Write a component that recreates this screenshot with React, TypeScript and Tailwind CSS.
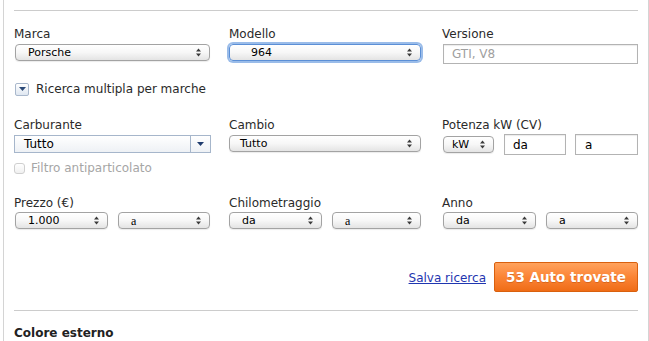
import React from "react";

function UpDown() {
  return (
    <svg width="5" height="9" viewBox="0 0 5 9" className="shrink-0" aria-hidden>
      <path d="M2.5 0.5 L5 3.5 L0 3.5 Z" fill="#3a3a3a" />
      <path d="M0 5.5 L5 5.5 L2.5 8.5 Z" fill="#3a3a3a" />
    </svg>
  );
}

function MacSelect({
  text,
  className = "",
  indent = "pl-[12px]",
  focused = false,
  serif = false,
}: {
  text: string;
  className?: string;
  indent?: string;
  focused?: boolean;
  serif?: boolean;
}) {
  return (
    <div
      className={`flex h-[17px] items-center justify-between rounded-[4px] border bg-gradient-to-b from-white via-[#f7f7f7] to-[#e4e4e4] pr-[8px] leading-none text-black ${indent} ${
        focused
          ? "border-[#5b8fd6] shadow-[0_0_0_2px_rgba(120,165,225,0.75)]"
          : "border-[#a3a3a3] shadow-[0_1px_1px_rgba(0,0,0,0.08)]"
      } ${serif ? "font-['Liberation_Serif',serif] text-[12px]" : "text-[11px]"} ${className}`}
    >
      <span>{text}</span>
      <UpDown />
    </div>
  );
}

function Label({ children }: { children: React.ReactNode }) {
  return <div className="h-[14px] text-[12px] leading-[14px] text-[#2a2a2a]">{children}</div>;
}

export default function App() {
  return (
    <div className="h-[341px] w-[649px] overflow-hidden bg-white font-['DejaVu_Sans',sans-serif]">
      <div className="ml-[3px] h-full w-[646px] border-x border-[#d4d4d4] px-[10px] pt-[10px]">
        <div className="border-t border-[#cccccc]" />

        {/* Marca / Modello / Versione */}
        <div className="mt-[16px] grid grid-cols-[215px_213px_197px]">
          <div className="pr-[2px]">
            <Label>Marca</Label>
            <MacSelect text="Porsche" className="ml-[1px] mt-[3px] w-[195px]" indent="pl-[12px]" />
          </div>
          <div>
            <Label>Modello</Label>
            <MacSelect text="964" focused className="mt-[3px] w-[192px]" indent="pl-[21px]" />
          </div>
          <div>
            <Label>Versione</Label>
            <div className="ml-[1px] mt-[3px] flex h-[20px] w-[195px] items-center border border-[#b3b3b3] pl-[8px] text-[12px] text-[#a0a0a0] shadow-[inset_0_1px_1px_rgba(0,0,0,0.08)]">
              GTI, V8
            </div>
          </div>
        </div>

        {/* Ricerca multipla */}
        <div className="ml-[1px] mt-[18px] flex h-[14px] items-center gap-[7px]">
          <span className="flex h-[13px] w-[14px] items-center justify-center rounded-[2px] border border-[#a9b8cc] bg-gradient-to-b from-white to-[#dfe7f1]">
            <svg width="7" height="4" viewBox="0 0 7 4" aria-hidden>
              <path d="M0 0 L7 0 L3.5 4 Z" fill="#2c4a78" />
            </svg>
          </span>
          <span className="text-[12px] leading-[14px] text-[#2a2a2a]">Ricerca multipla per marche</span>
        </div>

        {/* Carburante / Cambio / Potenza */}
        <div className="mt-[22px] grid grid-cols-[215px_213px_197px]">
          <div>
            <Label>Carburante</Label>
            <div className="mt-[3px] flex h-[18px] w-[197px] border border-[#a6b6cb] bg-gradient-to-b from-white to-[#eef1f5]">
              <span className="flex-1 pl-[9px] text-[12px] leading-[16px] text-black">Tutto</span>
              <span className="flex w-[20px] items-center justify-center border-l border-[#a6b6cb]">
                <svg width="7" height="4" viewBox="0 0 7 4" aria-hidden>
                  <path d="M0 0 L7 0 L3.5 4 Z" fill="#1f3c6e" />
                </svg>
              </span>
            </div>
            <div className="mt-[8px] flex items-center gap-[6px]">
              <span className="h-[11px] w-[11px] rounded-[3px] border border-[#cfcfcf] bg-gradient-to-b from-white to-[#f0f0f0]" />
              <span className="text-[12px] leading-[14px] text-[#a6a6a6]">Filtro antiparticolato</span>
            </div>
          </div>
          <div>
            <Label>Cambio</Label>
            <MacSelect text="Tutto" className="mt-[3px] w-[192px]" indent="pl-[10px]" />
          </div>
          <div>
            <Label>Potenza kW (CV)</Label>
            <div className="mt-[2px] flex items-center">
              <MacSelect text="kW" className="ml-[1px] w-[51px]" indent="pl-[8px]" />
              <div className="ml-[10px] flex h-[21px] w-[62px] items-center border border-[#b3b3b3] pl-[8px] text-[12px] text-black shadow-[inset_0_1px_1px_rgba(0,0,0,0.08)]">
                da
              </div>
              <div className="ml-[9px] flex h-[21px] w-[63px] items-center border border-[#b3b3b3] pl-[9px] text-[12px] text-black shadow-[inset_0_1px_1px_rgba(0,0,0,0.08)]">
                a
              </div>
            </div>
          </div>
        </div>

        {/* Prezzo / Chilometraggio / Anno */}
        <div className="mt-[21px] grid grid-cols-[215px_213px_197px]">
          <div>
            <Label>Prezzo (€)</Label>
            <div className="mt-[2px] flex gap-[10px]">
              <MacSelect text="1.000" className="ml-[1px] w-[93px]" indent="pl-[12px]" />
              <MacSelect text="a" serif className="w-[92px]" indent="pl-[12px]" />
            </div>
          </div>
          <div>
            <Label>Chilometraggio</Label>
            <div className="mt-[2px] flex gap-[10px]">
              <MacSelect text="da" className="w-[93px]" indent="pl-[12px]" />
              <MacSelect text="a" serif className="w-[89px]" indent="pl-[12px]" />
            </div>
          </div>
          <div>
            <Label>Anno</Label>
            <div className="mt-[2px] flex gap-[10px]">
              <MacSelect text="da" className="ml-[1px] w-[93px]" indent="pl-[12px]" />
              <MacSelect text="a" className="w-[92px]" indent="pl-[12px]" />
            </div>
          </div>
        </div>

        {/* Actions */}
        <div className="mt-[33px] flex items-center justify-end gap-[8px]">
          <a href="#" className="mt-[2px] text-[12px] text-[#1f36b0] underline">
            Salva ricerca
          </a>
          <button className="h-[30px] w-[144px] rounded-[2px] border border-[#d9600e] bg-gradient-to-b from-[#ffa25c] via-[#fb8434] to-[#ef6c15] text-[13.5px] font-bold text-white [text-shadow:0_1px_0_rgba(160,60,0,0.35)]">
            53 Auto trovate
          </button>
        </div>

        <div className="mt-[18px] border-t border-[#cccccc]" />

        <div className="mt-[15px] text-[12px] font-bold leading-[14px] text-[#222]">Colore esterno</div>
      </div>
    </div>
  );
}
